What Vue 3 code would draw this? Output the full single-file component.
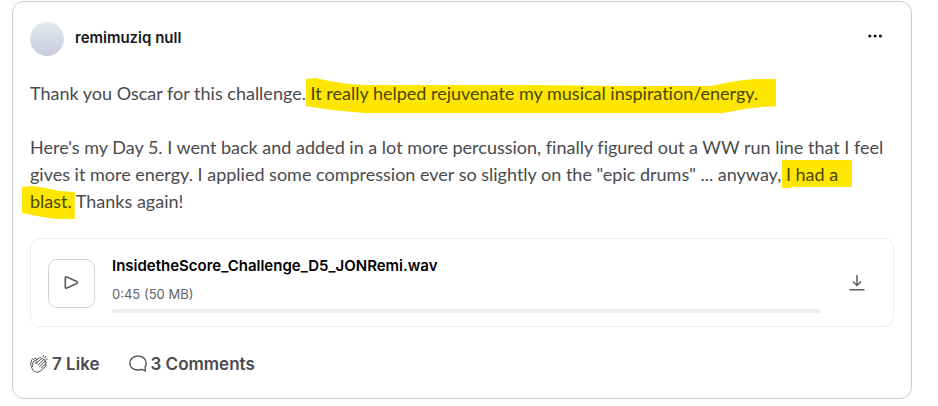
<script setup>
import { ref } from 'vue'

const author = 'remimuziq null'
const file = { name: 'InsidetheScore_Challenge_D5_JONRemi.wav', meta: '0:45 (50 MB)' }
const likes = ref(7)
const comments = ref(3)
</script>

<template>
  <article class="card">
    <header class="head">
      <span class="avatar"></span>
      <h2 class="author">{{ author }}</h2>
      <button class="icon-button more" type="button" aria-label="More options">
        <svg width="16" height="6" viewBox="0 0 16 6" fill="#17181c">
          <circle cx="2.8" cy="3" r="1.6" /><circle cx="8.1" cy="3" r="1.6" /><circle cx="13.4" cy="3" r="1.6" />
        </svg>
      </button>
    </header>

    <div class="body">
      <p>
        Thank you Oscar for this challenge.
        <mark class="marked long"><svg viewBox="0 0 476 36" preserveAspectRatio="none"><path d="M0 1L10 0Q34 6 60 7H225L330 8H410Q435 2 455 1L476 1V28Q450 29 422 35L330 35H60Q28 33 0 28Z" /></svg><span>It really helped rejuvenate my musical inspiration/energy.</span></mark>
      </p>
      <p>
        Here's my Day 5. I went back and added in a lot more percussion, finally figured out a WW run line that I feel<br />
        gives it more energy. I applied some compression ever so slightly on the "epic drums" ... anyway,
        <mark class="marked short"><svg viewBox="0 0 71 29" preserveAspectRatio="none"><path d="M0 0H71V27H10L8 28H0Z" /></svg><span>I had a</span></mark><br />
        <mark class="marked tail"><svg viewBox="0 0 54 34" preserveAspectRatio="none"><path d="M0 1L10 0Q22 1 38 5L54 6V33H36Q18 31 0 27Z" /></svg><span>blast.</span></mark>
        Thanks again!
      </p>
    </div>

    <section class="file">
      <button class="play" type="button" aria-label="Play">
        <svg width="16" height="16" viewBox="0 0 16 16" fill="none" stroke="#5b5f66" stroke-width="1.7" stroke-linejoin="round">
          <path d="M1.3 3Q1.3 1.5 2.8 2L12.3 6.3Q14.7 7.5 12.3 8.7L2.8 13Q1.3 13.5 1.3 12Z" />
        </svg>
      </button>
      <div class="info">
        <h3 class="name">{{ file.name }}</h3>
        <span class="meta">{{ file.meta }}</span>
        <div class="track"></div>
      </div>
      <button class="icon-button" type="button" aria-label="Download">
        <svg width="16" height="16" viewBox="0 0 16 16" fill="none" stroke="#5b5f66" stroke-width="1.5">
          <path d="M8 0V10.5M4 6.5L8 10.5L12 6.5M0.5 14.7H15.5" />
        </svg>
      </button>
    </section>

    <footer class="actions">
      <button class="action" type="button">
        <svg width="18" height="18" viewBox="0 0 18 18" fill="none" stroke="#4a4a4d" stroke-width="1" stroke-linecap="round" stroke-linejoin="round">
          <path d="M3.1 7.6L2.4 10.6Q.5 12.6 3 15L4.6 16.6Q7.6 18.4 10.8 15.8L15.6 11.2Q16.6 9.8 15.5 9L16.1 8Q16.4 6.6 15 6.1Q15.2 4.4 13.4 4.3Q12.6 2.8 11.2 3.8L5.8 8.8L6.2 6.4Q5.6 4.6 4.2 5.8Z" />
          <path d="M2.2 11.8Q.4 10.6.7 8.6L1.5 4.9Q2.4 3.4 3.7 4.6Q4.4 2.6 6 3.2Q6.8 3.6 6.6 5.2L9.4 2.6Q10.6 1.8 11.3 3M8 10.2L13.4 4.9M9.6 11.6L15 6.5M11.2 13L15.5 9M13.2 1.8L13.4.8M14.8 2.8L15.8 1.4M16 4.4L17.2 4" />
        </svg>
        <span>{{ likes }} Like</span>
      </button>
      <button class="action" type="button">
        <svg width="18" height="18" viewBox="0 0 18 18" fill="none" stroke="#4a4a4d" stroke-width="1.3" stroke-linejoin="round">
          <path d="M16 12.2Q17.2 10.4 17.2 8.2C17.2 4.3 14 1.2 9.4 1.2H8.6C4 1.2.8 4.3.8 8.2S4 15 8.6 15H9.4Q11.2 15 12.7 14.4L16.5 16Z" />
        </svg>
        <span>{{ comments }} Comments</span>
      </button>
    </footer>
  </article>
</template>

<style>
body {
  background: #fff;
}
</style>

<style scoped>
.card {
  margin: 1px 26px 7px 12px;
  padding: 20px 17px 22px;
  border: 1px solid #c5ccd8;
  border-radius: 12px;
  font-family: Inter, "Liberation Sans", sans-serif;
  color: #4a4a4d;
}
button {
  margin: 0;
  padding: 0;
  border: 0;
  background: none;
  font: inherit;
  color: inherit;
  cursor: pointer;
}
svg {
  display: block;
}
.head {
  display: flex;
  align-items: flex-start;
  gap: 11px;
}
.avatar {
  width: 34px;
  height: 34px;
  border-radius: 50%;
  background: linear-gradient(#e6e8ee, #c9cbde);
}
.author {
  flex: 1;
  margin: 0;
  font-size: 15px;
  line-height: 32px;
  font-weight: 600;
  color: #17181c;
}
.icon-button {
  display: grid;
  place-items: center;
  width: 38px;
  height: 28px;
}
.body {
  margin-top: 24px;
  font-family: Lato, "Liberation Sans", sans-serif;
  font-size: 18px;
  line-height: 27px;
  font-variant-ligatures: none;
}
.body p {
  margin: 0 0 27px;
}
.body p:last-child {
  margin-bottom: 0;
}
.marked {
  position: relative;
  display: inline-block;
  background: none;
  color: #4b4700;
}
.marked svg {
  position: absolute;
  fill: #ffe600;
}
.marked span {
  position: relative;
}
.long svg {
  top: -2px;
  left: -5px;
  width: calc(100% + 23px);
  height: 36px;
}
.short svg {
  top: -1px;
  left: -4px;
  width: calc(100% + 18px);
  height: 29px;
}
.tail svg {
  top: -2px;
  left: -8px;
  width: calc(100% + 11px);
  height: 34px;
}
.file {
  display: flex;
  align-items: center;
  gap: 17px;
  margin-top: 23px;
  padding: 14px 17px 13px;
  border: 1px solid #eceded;
  border-radius: 10px;
}
.play {
  display: grid;
  place-items: center;
  box-sizing: border-box;
  width: 47px;
  height: 49px;
  border: 1px solid #d3d4d7;
  border-radius: 9px;
}
.info {
  flex: 1;
  min-width: 0;
}
.name {
  margin: 0;
  font-size: 15px;
  line-height: 26px;
  font-weight: 600;
  color: #000;
}
.meta {
  display: block;
  margin-top: 5px;
  font-size: 13px;
  line-height: 20px;
  color: #5f636a;
}
.track {
  margin-top: 5px;
  height: 4px;
  border-radius: 2px;
  background: #ecedef;
}
.actions {
  display: flex;
  gap: 29px;
  margin-top: 25px;
}
.action {
  display: flex;
  align-items: center;
  gap: 4px;
  font-size: 17px;
  line-height: 24px;
  font-weight: 600;
}
</style>
